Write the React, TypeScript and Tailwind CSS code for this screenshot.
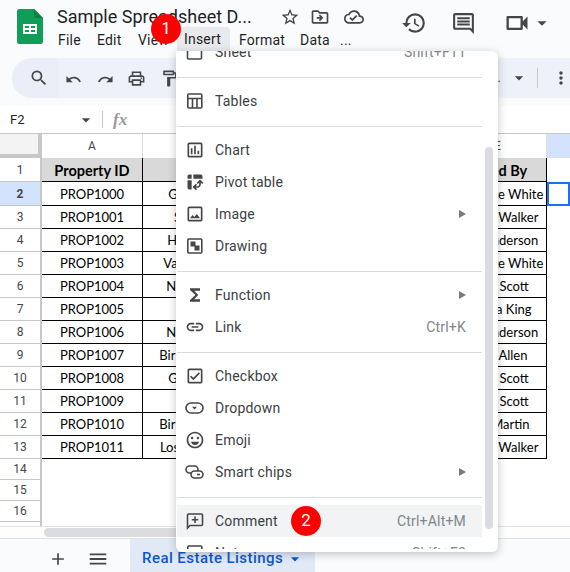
import React from "react";
import {
  MdOutlineStarBorder, MdOutlineDriveFileMove, MdOutlineCloudDone, MdHistory, MdOutlineComment,
  MdOutlineVideocam, MdArrowDropDown, MdSearch, MdUndo, MdRedo, MdOutlinePrint, MdOutlineFormatPaint,
  MdMoreVert, MdOutlineInsertChart, MdOutlinePivotTableChart, MdOutlineImage, MdFunctions, MdLink,
  MdOutlineCheckBox, MdOutlineEmojiEmotions, MdAdd, MdMenu,
} from "react-icons/md";

const rows: string[][] = [
  ["PROP1000", "Glendale", "Charlotte White"],
  ["PROP1001", "Seattle", "Robert Walker"],
  ["PROP1002", "Hamilton", "Ann Anderson"],
  ["PROP1003", "Vancouver", "Charlotte White"],
  ["PROP1004", "New York", "Mark Scott"],
  ["PROP1005", "", "Sandra King"],
  ["PROP1006", "New York", "Ann Anderson"],
  ["PROP1007", "Birmingham", "Alice Allen"],
  ["PROP1008", "Glendale", "Mark Scott"],
  ["PROP1009", "", "Mark Scott"],
  ["PROP1010", "Birmingham", "Ana Martin"],
  ["PROP1011", "Los Angeles", "Robert Walker"],
];

const cell = "border-r border-b border-black flex items-center justify-center overflow-hidden whitespace-nowrap pt-[2px]";
const headCell = "border-r border-b border-black flex items-center justify-center overflow-hidden whitespace-nowrap pt-[2px] bg-[#d9d9d9] font-bold text-[14.5px]";
const rowHead = "border-r-[2px] border-b border-[#c7c7c7] flex items-center justify-center text-[12px] text-[#444746] font-['Roboto',sans-serif]";

function SvgIcon({ children }: { children: React.ReactNode }) {
  return (
    <svg width="20" height="20" viewBox="0 0 20 20" fill="none" stroke="#444746" strokeWidth="1.6">
      {children}
    </svg>
  );
}

function Item({ icon, label, shortcut, arrow, active }: { icon?: React.ReactNode; label: string; shortcut?: string; arrow?: boolean; active?: boolean }) {
  return (
    <div className={`h-8 flex items-center pl-[4px] pr-[16px] ${active ? "bg-[#f1f3f4]" : ""}`}>
      <span className="w-[34px] pl-[4px] flex items-center justify-start text-[#444746]">{icon}</span>
      <span className="flex-1 text-[14px] tracking-[0.2px] text-[#3c4043]">{label}</span>
      {shortcut && <span className="text-[14px] text-[#80868b] tracking-[0.2px]">{shortcut}</span>}
      {arrow && <span className="w-0 h-0 border-y-[4px] border-y-transparent border-l-[7px] border-l-[#7a7a7a]" />}
    </div>
  );
}

const Divider = () => <div className="h-px mt-[9px] mb-[7px] bg-[#dadce0]" />;

function Badge({ n, className }: { n: number; className: string }) {
  return (
    <div className={`absolute w-[30px] h-[30px] rounded-full bg-[#fe0000] text-white text-[17px] flex items-center justify-center ${className}`}>
      {n}
    </div>
  );
}

export default function App() {
  return (
    <div className="relative w-[570px] h-[572px] overflow-hidden bg-[#f9fbfd] flex flex-col font-['Roboto',sans-serif] text-[#1f1f1f]">
      {/* Title bar */}
      <div className="h-[58px] flex shrink-0">
        <div className="pl-[17px] pt-[9px] w-[57px] shrink-0">
          <svg width="26" height="35" viewBox="0 0 26 35">
            <path d="M2.5 0H17l9 9v23.5a2.5 2.5 0 0 1-2.5 2.5h-21A2.5 2.5 0 0 1 0 32.500V2.500A2.500 2.500 0 0 1 2.500 0Z" fill="#0f9d58" />
            <path d="M17 0l9 9h-6.500A2.500 2.500 0 0 1 17 6.500Z" fill="#0b8043" />
            <path d="M6 15h14v10H6Zm2 2v2h4v-2Zm6 0v2h4v-2Zm-6 4v2h4v-2Zm6 0v2h4v-2Z" fill="#fff" fillRule="evenodd" />
          </svg>
        </div>
        <div className="w-[344px] shrink-0 flex flex-col">
          <div className="h-[33px] flex items-center">
            <span className="text-[18px] w-[223px] whitespace-nowrap">Sample Spreadsheet D...</span>
            <MdOutlineStarBorder size={20} className="text-[#444746] mr-[10px]" />
            <MdOutlineDriveFileMove size={20} className="text-[#444746] mr-[14px]" />
            <MdOutlineCloudDone size={20} className="text-[#444746]" />
          </div>
          <div className="flex text-[14px] h-[19px] items-center tracking-[0.2px] -mt-[2px]">
            <span className="ml-[1px] w-[39px]">File</span>
            <span className="w-[41px]">Edit</span>
            <span className="w-[46px]">View</span>
            <span className="w-[55px]">Insert</span>
            <span className="w-[61px]">Format</span>
            <span className="w-[40px]">Data</span>
            <span>...</span>
          </div>
        </div>
        <div className="h-[46px] flex items-center">
          <MdHistory size={26} className="text-[#444746] mr-[24px]" />
          <MdOutlineComment size={25} className="text-[#444746] mr-[27px]" />
          <MdOutlineVideocam size={28} className="text-[#444746]" />
          <MdArrowDropDown size={22} className="text-[#444746]" />
        </div>
      </div>

      {/* Toolbar */}
      <div className="h-[40px] ml-[12px] rounded-l-[20px] bg-[#edf2fa] flex items-center shrink-0 text-[#444746]">
        <span className="h-[40px] w-[46px] pl-[17px] rounded-l-[20px] flex items-center bg-[#e9eef8]"><MdSearch size={20} /></span>
        <MdUndo size={17} className="ml-[7px] mt-[2px]" />
        <MdRedo size={17} className="ml-[15px] mt-[2px]" />
        <MdOutlinePrint size={19} className="ml-[13px] mt-[1px]" />
        <MdOutlineFormatPaint size={19} className="ml-[14px]" />
        <span className="ml-auto text-[13px] mr-[8px]">..</span>
        <MdArrowDropDown size={20} className="mr-[8px]" />
        <span className="w-px h-[20px] bg-[#c7c7c7] mr-[13px]" />
        <MdMoreVert size={20} className="mr-[-1px]" />
      </div>

      {/* Formula bar */}
      <div className="mt-[8px] h-[28px] bg-white border-b border-[#c7c7c7] flex items-center shrink-0">
        <span className="ml-[10px] w-[66px] text-[13px]">F2</span>
        <MdArrowDropDown size={20} className="text-[#444746]" />
        <span className="ml-[6px] w-px h-[17px] bg-[#c7c7c7]" />
        <span className="ml-[10px] text-[17px] italic font-bold font-['Liberation_Serif',serif] text-[#999999]">fx</span>
      </div>

      {/* Sheet */}
      <div className="grid grid-cols-[42px_101px_102px_102px_102px_98px_23px] grid-rows-[24px_24px_24px_repeat(11,23px)_21px_21px_21px_4px] bg-white text-[13px] text-black font-['Lato',sans-serif] shrink-0">
        <div className="bg-[#f3f3f3] border-r-[4px] border-b-[4px] border-[#c7c7c7]" />
        {["A", "B", "C", "D", "E"].map((c) => (
          <div key={c} className="border-r border-[#dadce0] flex items-center justify-center text-[12px] text-[#444746] font-['Roboto',sans-serif]">{c}</div>
        ))}
        <div className="bg-[#d3e3fd]" />

        <div className={rowHead}>1</div>
        <div className={headCell}>Property ID</div>
        <div className={headCell}>City</div>
        <div className={headCell}>State</div>
        <div className={headCell}>Agent</div>
        <div className={headCell}>Listed By</div>
        <div />

        {rows.map((r, i) => (
          <React.Fragment key={r[0]}>
            <div className={`${rowHead} ${i === 0 ? "bg-[#d3e3fd] font-bold text-[#0b2a5c]" : ""}`}>{i + 2}</div>
            <div className={cell}>{r[0]}</div>
            <div className={cell}>{r[1]}</div>
            <div className={cell} />
            <div className={cell} />
            <div className={cell}>{r[2]}</div>
            <div className={i === 0 ? "border-2 border-[#1a73e8]" : ""} />
          </React.Fragment>
        ))}

        {[14, 15, 16].map((n) => (
          <React.Fragment key={n}>
            <div className={rowHead}>{n}</div>
            <div className="col-span-6" />
          </React.Fragment>
        ))}
        <div className="border-r-[2px] border-[#c7c7c7]" />
        <div className="col-span-6" />
      </div>

      {/* Horizontal scrollbar */}
      <div className="h-[13px] bg-white border-y border-[#e1e3e1] shrink-0 pl-[44px] pt-[1px]">
        <div className="h-[9px] w-[400px] rounded-full bg-[#dadce0]" />
      </div>

      {/* Sheet tabs */}
      <div className="flex-1 flex items-center text-[#444746]">
        <MdAdd size={20} className="ml-[48px] mt-[6px]" />
        <MdMenu size={22} className="ml-[19px] mt-[6px]" />
        <div className="ml-[21px] h-full w-[185px] bg-[#e1e9f7] flex items-center pl-[12px] pt-[6px] text-[15px] font-medium tracking-[0.45px] text-[#0b57d0]">
          <span>Real Estate Listings</span>
          <MdArrowDropDown size={20} className="ml-[2px]" />
        </div>
      </div>

      {/* Insert tab highlight */}
      <div className="absolute left-[177px] top-[27px] w-[53px] h-[24px] rounded-t-[4px] bg-[#e8eaed] flex items-center pl-[7px] text-[14px] tracking-[0.2px]">Insert</div>

      {/* Insert menu */}
      <div className="absolute left-[176px] top-[51px] w-[322px] h-[501px] bg-white rounded-b-[6px] rounded-tr-[6px] overflow-hidden shadow-[0_2px_8px_rgba(60,64,67,0.3)]">
        <div className="h-[498px] overflow-hidden">
          <div className="-mt-[15px] w-[305px] ml-[1px]">
            <Item label="Sheet" shortcut="Shift+F11" icon={<SvgIcon><rect x="2.500" y="3" width="14" height="14" rx="1" /></SvgIcon>} />
            <Divider />
            <Item label="Tables" icon={<SvgIcon><rect x="2.800" y="3" width="14" height="14" rx="1" /><path d="M2.800 7.500h14M7.500 7.500V17M12 7.500V17" /></SvgIcon>} />
            <Divider />
            <Item label="Chart" icon={<MdOutlineInsertChart size={20} className="-ml-[0.5px]" />} />
            <Item label="Pivot table" icon={<MdOutlinePivotTableChart size={20} />} />
            <Item label="Image" arrow icon={<MdOutlineImage size={20} />} />
            <Item label="Drawing" icon={<SvgIcon><rect x="2.800" y="3" width="14" height="14" rx="1" /><rect x="5.500" y="5.500" width="5" height="5" fill="#444746" stroke="none" /><rect x="9.500" y="9.500" width="5" height="5" fill="#444746" stroke="none" /></SvgIcon>} />
            <Divider />
            <Item label="Function" arrow icon={<MdFunctions size={20} />} />
            <Item label="Link" shortcut="Ctrl+K" icon={<MdLink size={20} />} />
            <Divider />
            <Item label="Checkbox" icon={<MdOutlineCheckBox size={20} />} />
            <Item label="Dropdown" icon={<SvgIcon><rect x="1" y="5" width="17" height="10" rx="5" /><path d="M7 8.800h5l-2.500 2.700Z" fill="#444746" stroke="none" /></SvgIcon>} />
            <Item label="Emoji" icon={<MdOutlineEmojiEmotions size={20} />} />
            <Item label="Smart chips" arrow icon={<SvgIcon><rect x="1" y="4" width="12" height="7" rx="3.500" /><rect x="6" y="9" width="12" height="7" rx="3.500" fill="#fff" /><path d="M12 12.500h3" /></SvgIcon>} />
            <Divider />
            <Item label="Comment" shortcut="Ctrl+Alt+M" active icon={<SvgIcon><path d="M2.500 17V4a1 1 0 0 1 1-1h13a1 1 0 0 1 1 1v9.500a1 1 0 0 1-1 1H5Z" /><path d="M10 5.500v6.500M6.800 8.800h6.500" /></SvgIcon>} />
            <Item label="Note" shortcut="Shift+F2" icon={<SvgIcon><rect x="2.800" y="3" width="14" height="14" rx="1" /><path d="M5.500 7.500h8.500" /></SvgIcon>} />
          </div>
        </div>
        <div className="absolute right-[5px] top-[96px] w-[8px] h-[382px] rounded-full bg-[#dadce0]" />
      </div>

      <Badge n={1} className="left-[151px] top-[14px]" />
      <Badge n={2} className="left-[291px] top-[506px]" />
    </div>
  );
}
